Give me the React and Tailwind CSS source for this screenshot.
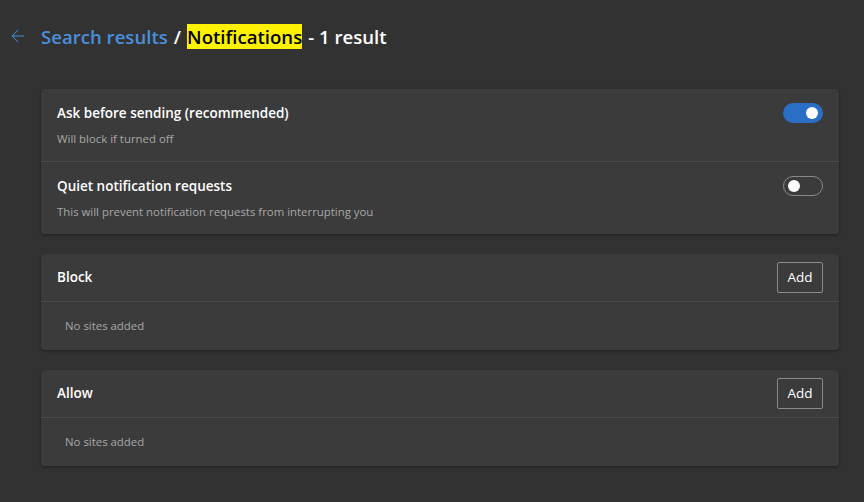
import { ArrowLeft } from "lucide-react";

function Toggle({ on }) {
  return on ? (
    <div className="flex h-5 w-10 items-center justify-end rounded-full bg-[#2b6ec6] px-[5px]">
      <div className="h-3 w-3 rounded-full bg-white" />
    </div>
  ) : (
    <div className="flex h-5 w-10 items-center justify-start rounded-full border border-[#8a8a8a] px-1">
      <div className="h-3 w-3 rounded-full bg-white" />
    </div>
  );
}

function ToggleRow({ title, desc, on, last }) {
  return (
    <div className={`flex items-start justify-between px-4 pt-[14px] pb-[14px] ${last ? "" : "border-b border-[#4a4a4a]"}`}>
      <div>
        <div className="text-[13.5px] font-semibold leading-5 text-white">{title}</div>
        <div className="mt-2 text-[11.4px] leading-4 text-[#a8a8a8]">{desc}</div>
      </div>
      <Toggle on={on} />
    </div>
  );
}

function SiteList({ title }) {
  return (
    <div className="rounded bg-[#3b3b3b] shadow-[0_1px_3px_rgba(0,0,0,0.35)]">
      <div className="flex h-12 items-center justify-between border-b border-[#4a4a4a] pl-4 pr-4">
        <div className="text-[13.5px] font-semibold text-white">{title}</div>
        <button className="h-[31px] w-[46px] rounded-[2px] border border-[#8a8a8a] text-[13.5px] text-white">
          Add
        </button>
      </div>
      <div className="flex h-12 items-center pl-6 text-[11.4px] text-[#a8a8a8]">No sites added</div>
    </div>
  );
}

export default function App() {
  return (
    <div className="min-h-[502px] bg-[#323232] font-['Open_Sans',sans-serif]">
      <div className="flex h-[72px] items-center pl-[8px]">
        <ArrowLeft className="h-5 w-5 text-[#4a8fdc]" strokeWidth={1.2} />
        <div className="ml-[13px] flex items-center text-[18.6px] font-semibold leading-[25px]">
          <span className="text-[#4a8fdc]">Search results</span>
          <span className="mx-[6px] text-white">/</span>
          <span className="bg-[#fff200] text-black">Notifications</span>
          <span className="ml-[6px] text-white">- 1 result</span>
        </div>
      </div>
      <div className="flex flex-col gap-5 pl-[41px] pr-[25px] pt-[17px]">
        <div className="rounded bg-[#3b3b3b] shadow-[0_1px_3px_rgba(0,0,0,0.35)]">
          <ToggleRow title="Ask before sending (recommended)" desc="Will block if turned off" on />
          <ToggleRow
            title="Quiet notification requests"
            desc="This will prevent notification requests from interrupting you"
            last
          />
        </div>
        <SiteList title="Block" />
        <SiteList title="Allow" />
      </div>
    </div>
  );
}
